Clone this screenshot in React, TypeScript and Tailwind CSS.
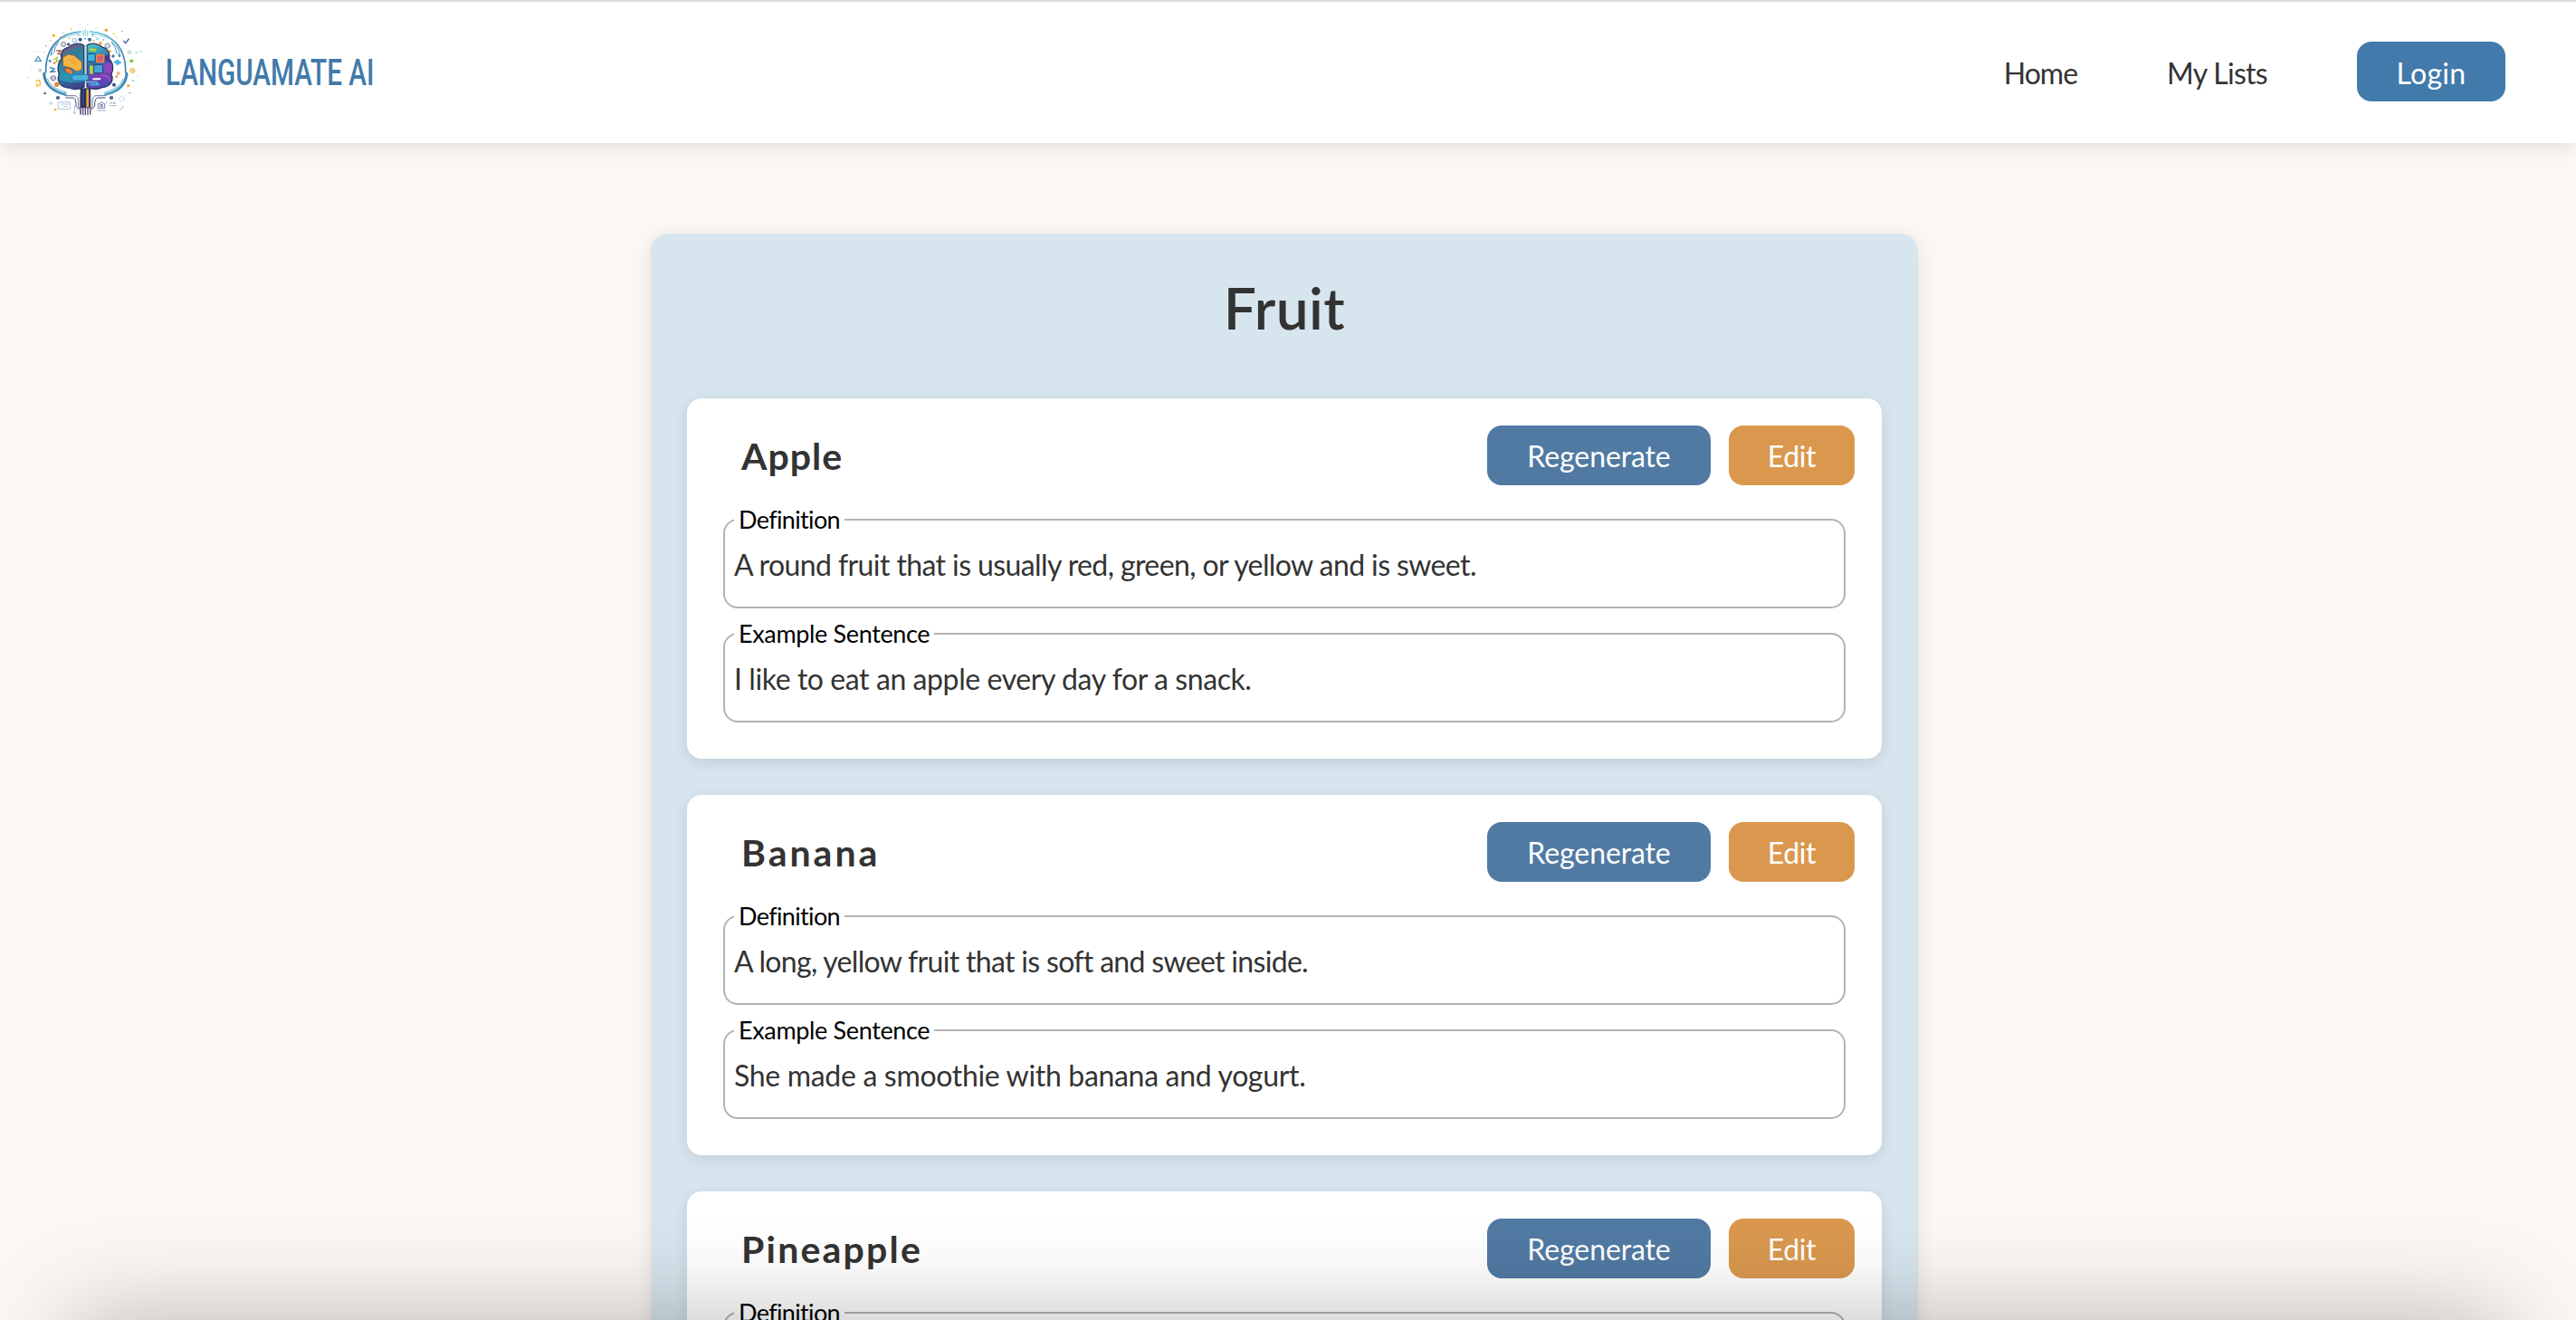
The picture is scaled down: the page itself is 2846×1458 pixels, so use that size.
type Entry = {
  word: string;
  wordClass: string;
  definition: string;
  definitionClass: string;
  sentence: string;
  sentenceClass: string;
};

const entries: Entry[] = [
  {
    word: "Apple",
    wordClass: "tracking-[1px]",
    definition: "A round fruit that is usually red, green, or yellow and is sweet.",
    definitionClass: "tracking-[-0.6px]",
    sentence: "I like to eat an apple every day for a snack.",
    sentenceClass: "tracking-[-0.42px]",
  },
  {
    word: "Banana",
    wordClass: "tracking-[3px]",
    definition: "A long, yellow fruit that is soft and sweet inside.",
    definitionClass: "tracking-[-0.68px]",
    sentence: "She made a smoothie with banana and yogurt.",
    sentenceClass: "tracking-[-0.32px]",
  },
  {
    word: "Pineapple",
    wordClass: "tracking-[2.2px]",
    definition: "A tropical fruit with spiky skin and sweet, juicy flesh.",
    definitionClass: "tracking-[-0.5px]",
    sentence: "We put pineapple on our pizza.",
    sentenceClass: "tracking-[-0.3px]",
  },
];

const confetti: [number, number, number, string][] = [
  [178, 118, 5, "#f2b630"], [200, 124, 3, "#f2b630"], [236, 96, 3, "#f5c860"], [168, 134, 2, "#e9a23a"],
  [152, 152, 3, "#8bbcd8"], [208, 110, 2, "#63a7cc"], [352, 101, 5, "#e0a030"], [377, 113, 3, "#f2c04b"],
  [405, 104, 2, "#5b92bb"], [386, 124, 2, "#f5c860"], [146, 174, 2, "#9fc5dc"], [436, 203, 6, "#8abf4e"],
  [452, 174, 2, "#6aaed1"], [467, 170, 2, "#9db7cb"], [103, 220, 2, "#c9d6e0"], [92, 257, 2, "#b0bccb"],
  [121, 279, 3, "#f2b630"], [149, 310, 4, "#50669b"], [192, 325, 6, "#4b6394"], [369, 325, 6, "#4b6394"],
  [183, 364, 4, "#f2b630"], [425, 285, 5, "#f2b04a"], [441, 268, 3, "#9ac7de"], [430, 308, 3, "#75aaca"],
  [456, 253, 2, "#8fc0d9"], [290, 82, 2, "#9fcfe2"], [318, 92, 2, "#e9b65b"], [265, 82, 2, "#d6e2ea"],
];

const ringGlyphs: [number, number, number, string][] = [
  [227, 147, 5, "#4a5c8c"], [266, 131, 6, "#384f84"], [297, 131, 6, "#3c6b9f"], [310, 135, 3, "#f0a63c"],
  [333, 143, 6, "#f2b24b"], [343, 132, 3, "#63c0dd"], [166, 202, 5, "#5aa5cb"], [180, 209, 4, "#ef8f3d"],
  [375, 186, 5, "#3678a8"], [386, 254, 4, "#f08b48"], [378, 281, 6, "#3b4b82"], [188, 280, 8, "#f0813b"],
  [392, 243, 6, "#f3b08a"], [168, 258, 3, "#b9a2c9"], [230, 127, 3, "#f2b630"], [282, 128, 3, "#42b7d9"],
  [364, 170, 5, "#f2ae45"], [396, 185, 4, "#3c8cc0"],
];

function Logo() {
  return (
    <svg viewBox="90 66 408 330" className="mb-[4px] h-[110px] w-[136px] shrink-0" fill="none" strokeLinecap="round">
      <defs>
        <linearGradient id="left" x1="200" y1="150" x2="260" y2="290" gradientUnits="userSpaceOnUse">
          <stop offset="0" stopColor="#8a4b7d" />
          <stop offset="0.35" stopColor="#2f7f9c" />
          <stop offset="0.7" stopColor="#2f8fb8" />
          <stop offset="1" stopColor="#4a3f8f" />
        </linearGradient>
        <linearGradient id="right" x1="300" y1="150" x2="355" y2="290" gradientUnits="userSpaceOnUse">
          <stop offset="0" stopColor="#45c3c4" />
          <stop offset="0.4" stopColor="#3b6ba8" />
          <stop offset="0.7" stopColor="#7a3fb0" />
          <stop offset="1" stopColor="#4b4bb5" />
        </linearGradient>
        <linearGradient id="ring" x1="150" y1="0" x2="420" y2="0" gradientUnits="userSpaceOnUse">
          <stop offset="0" stopColor="#3c7fae" />
          <stop offset="0.6" stopColor="#5fc4de" />
          <stop offset="1" stopColor="#3d86b3" />
        </linearGradient>
      </defs>

      <g>
        {confetti.map(([x, y, r, c]) => (
          <rect key={`${x}-${y}`} x={x - r} y={y - r} width={r * 2} height={r * 1.7} rx={r / 2} fill={c} />
        ))}
        {ringGlyphs.map(([x, y, r, c]) => (
          <circle key={`${x}-${y}`} cx={x} cy={y} r={r} fill={c} />
        ))}
      </g>

      <g stroke="url(#ring)">
        <path d="M268 105 C205 108 150 150 152 240" strokeWidth="5" />
        <path d="M298 105 C362 108 418 150 416 240" strokeWidth="5" />
        <path d="M262 112 C240 114 222 120 208 128M304 112C326 114 344 120 358 128" strokeWidth="2" />
        <path d="M146 244 C148 282 178 304 216 313M420 244 C417 282 388 304 350 313" strokeWidth="9" />
        <path d="M158 262 C164 284 188 298 220 306M408 262 C402 284 378 298 346 306" strokeWidth="2.5" />
        <path d="M194 138 C177 152 170 166 168 184 L180 172 L184 156ZM370 140 C388 152 396 166 398 186 L386 174 L382 158Z" strokeWidth="3" />
        <path d="M283 98V116M276 103V118M290 103V118" strokeWidth="4" stroke="#8fd6e6" />
      </g>

      <g stroke="#566c9a" strokeWidth="2.5">
        <circle cx="210" cy="147" r="8" fill="#d9d6da" stroke="#8d8589" />
        <circle cx="356" cy="152" r="8" fill="#e8e4dc" />
        <circle cx="177" cy="259" r="8" fill="#cfcbd8" />
        <circle cx="247" cy="134" r="7" stroke="#46b4d3" />
        <circle cx="439" cy="234" r="8" stroke="#f2bb58" fill="#f7d48f" />
        <circle cx="404" cy="327" r="8" stroke="#a5d4e3" strokeWidth="2" />
        <circle cx="429" cy="173" r="5" stroke="#8cc79a" />
        <circle cx="132" cy="233" r="4" stroke="#8bb5ce" />
        <circle cx="168" cy="342" r="4" stroke="#a0c6dc" />
        <path d="M117 202 L126 188 L136 202Z" stroke="#4b9bc6" strokeWidth="4" />
        <path d="M410 136 L416 143 L427 129" stroke="#456b9c" strokeWidth="4" />
        <path d="M120 268 L131 266 L134 280 L122 286" stroke="#f2b630" strokeWidth="4" />
        <path d="M166 224 L180 228 L168 238 L183 237" stroke="#3b7ba3" strokeWidth="4" />
        <path d="M178 198 L190 190 L186 205 L196 200" stroke="#a3c441" strokeWidth="4" />
        <path d="M188 168 L202 168 L192 178 L204 180" stroke="#b5613b" strokeWidth="4" />
        <path d="M378 205 L390 198 L402 207 L390 215Z" fill="#4db7dc" stroke="#4db7dc" />
        <path d="M317 122 L327 129 L318 131" stroke="#67c4df" />
        <path d="M303 114H311M307 114V120M256 117H266" stroke="#7aa3c2" />
        <path d="M106 170L112 171H144M488 211H502M442 176L452 172H474" stroke="#d3dde2" strokeWidth="1.5" />
      </g>

      <g stroke="#283564" strokeWidth="4">
        <path
          d="M278 150 C262 140 238 145 227 157 C207 160 199 179 204 194 C190 211 190 232 196 246 C186 270 202 290 228 291 C246 298 265 296 279 288Z"
          fill="url(#left)"
        />
        <path
          d="M288 150 C304 140 328 145 340 157 C358 160 366 180 362 196 C377 210 376 232 369 246 C379 268 364 288 338 290 C320 298 302 296 288 288Z"
          fill="url(#right)"
        />
      </g>
      <path d="M214 176 L262 156 L275 174 L250 180Z" fill="#2c8292" />
      <path d="M208 190 L226 180 L246 184 L272 206 L271 231 L254 237 L237 226 L210 219Z" fill="#f4b544" stroke="#7b4a3a" strokeWidth="2" />
      <path d="M229 196 L250 214M238 194L256 209" stroke="#dd8f2d" strokeWidth="2" />
      <path d="M214 226 L230 226 L243 240 L238 249 L219 239Z" fill="#ef7d2f" stroke="#7b3f3a" strokeWidth="2" />
      <path d="M204 244 C228 236 240 252 280 244 L280 268 C250 276 218 272 204 262Z" fill="#2b93b0" />
      <path d="M200 268 C230 284 262 280 280 278M206 278 C236 292 262 288 280 286" stroke="#28457f" strokeWidth="3" />
      <rect x="238" y="247" width="56" height="20" rx="9" fill="#49b3df" stroke="#255a8b" strokeWidth="2" />
      <rect x="282" y="152" width="5" height="94" fill="#9fd7e4" />
      <path d="M296 160 L320 162 L317 171 L297 169Z" fill="#b9cf3c" />
      <rect x="290" y="178" width="26" height="26" rx="4" fill="#3fb4dd" stroke="#1f4679" strokeWidth="3" />
      <rect x="320" y="182" width="24" height="24" rx="3" fill="#d9596f" stroke="#e8913f" strokeWidth="4" />
      <path d="M348 186 L362 180 L364 205 L348 204Z" fill="#573089" />
      <rect x="297" y="217" width="12" height="28" rx="3" fill="#a9cf45" />
      <rect x="311" y="214" width="30" height="28" rx="4" fill="#4b9fdc" stroke="#1f4679" strokeWidth="3" />
      <rect x="345" y="210" width="26" height="30" rx="5" fill="#8d45bd" />
      <path d="M308 259 H335 L332 265 H306Z" fill="#f4f4ff" />
      <path d="M284 272 H320 L326 280 H300" stroke="#42bde0" strokeWidth="5" />
      <path d="M336 250 C356 250 362 258 364 266" stroke="#a14fc9" strokeWidth="5" />

      <rect x="266" y="292" width="34" height="66" fill="#26315c" />
      <rect x="286" y="296" width="8" height="60" fill="#f0a53b" />
      <path d="M276 296V350" stroke="#5a7db0" strokeWidth="2" />
      <g stroke="#6a7599" strokeWidth="3">
        <path d="M216 317 H248 Q258 318 260 334 V354 L267 362V378" />
        <path d="M218 324 H244 Q251 326 252 342 V352 L262 362" stroke="#454d7a" />
        <path d="M350 317 H318 Q308 318 306 334 V354 L299 362V378" />
        <path d="M348 324 H322 Q315 326 314 342 V352 L304 362" stroke="#454d7a" />
        <path d="M267 312V378M275 356V380M283 360V380M291 356V380M299 312V378" stroke="#5d4577" strokeWidth="4" />
      </g>

      <g stroke="#9bbdd0" strokeWidth="2.5">
        <path d="M194 338 H232 V361 H194Z" />
        <path d="M202 345 H226M212 353H226" stroke="#9daec4" strokeDasharray="4 3" />
        <path d="M247 349V372" />
        <circle cx="247" cy="374" r="3" />
        <path d="M326 344 H331 L334 339 H340 L343 344 H347 V358 H326Z" stroke="#526a9b" />
        <circle cx="336" cy="350" r="4" stroke="#3c5489" />
        <path d="M323 366H350" stroke="#8794b8" />
        <path d="M353 337V342M364 344L368 338L371 344M376 344V338L381 344V338M363 350H386" stroke="#93a9c3" />
        <path d="M408 350 L405 360 L397 362" />
        <path d="M224 385H318" stroke="#e7edf1" strokeWidth="1.5" />
      </g>
    </svg>
  );
}

function Field({ label, labelClass, text, textClass }: { label: string; labelClass: string; text: string; textClass: string }) {
  return (
    <fieldset className="mx-[40px] h-[115px] min-w-0 rounded-[16px] border-2 border-[#b3b3b3] pl-[10px]">
      <legend className={`pt-px pr-[5px] pb-px pl-[5px] text-[27px] leading-[32px] text-black ${labelClass}`}>{label}</legend>
      <p className={`pt-[13px] text-[32px] leading-[40px] whitespace-nowrap ${textClass}`}>{text}</p>
    </fieldset>
  );
}

function WordCard({ entry }: { entry: Entry }) {
  return (
    <article className="flex h-[398px] shrink-0 flex-col gap-[11px] rounded-[16px] bg-white pt-[30px] shadow-[0_4px_16px_rgba(0,0,0,0.1)]">
      <div className="mb-[10px] flex items-center gap-[20px] pr-[30px] pl-[60px]">
        <h2 className={`flex-1 pt-px text-[41px] font-bold leading-[50px] ${entry.wordClass}`}>{entry.word}</h2>
        <button className="h-[66px] w-[247px] rounded-[16px] bg-[#517aa3] pt-[2px] text-[32px] tracking-[-0.1px] text-white">
          Regenerate
        </button>
        <button className="h-[66px] w-[139px] rounded-[16px] bg-[#da984f] pt-[2px] text-[32px] tracking-[-0.4px] text-white">Edit</button>
      </div>
      <Field label="Definition" labelClass="tracking-[-0.65px]" text={entry.definition} textClass={entry.definitionClass} />
      <Field label="Example Sentence" labelClass="tracking-[-0.35px]" text={entry.sentence} textClass={entry.sentenceClass} />
    </article>
  );
}

export default function App() {
  return (
    <div className="relative flex h-[1458px] w-full flex-col overflow-hidden bg-[#fbf7f4] font-[Lato,sans-serif] text-[#333333]">
      <header className="flex h-[158px] shrink-0 items-center justify-between border-t-2 border-[#dadada] bg-white pr-[78px] pb-[2px] pl-[30px] shadow-[0_4px_20px_rgba(0,0,0,0.1)]">
        <div className="flex items-center gap-[17px]">
          <Logo />
          <span className="origin-left scale-x-[0.742] pt-[3px] font-[Roboto,sans-serif] text-[40px] font-medium whitespace-nowrap text-[#417aab]">
            LANGUAMATE AI
          </span>
        </div>
        <nav className="flex items-center gap-[99px] text-[32px]">
          <a className="pt-[4px] tracking-[-1px]">Home</a>
          <a className="pt-[4px] tracking-[-0.7px]">My Lists</a>
          <button className="h-[66px] w-[164px] rounded-[16px] bg-[#417aab] pt-[3px] tracking-[0.3px] text-white">Login</button>
        </nav>
      </header>

      <main className="mt-[100px] ml-[719px] flex w-[1400px] shrink-0 flex-col gap-[40px] rounded-[20px] bg-[#d7e5ee] px-[40px] pt-[43px] pb-[40px] shadow-[0_4px_20px_rgba(0,0,0,0.1)]">
        <h1 className="mb-[22px] text-center text-[64px] font-semibold leading-[77px] tracking-[0.4px]">Fruit</h1>
        {entries.map((entry) => (
          <WordCard key={entry.word} entry={entry} />
        ))}
      </main>

      <div className="pointer-events-none absolute top-[1458px] right-[80px] left-[80px] h-[300px] shadow-[0_0_110px_rgba(0,0,0,0.28)]" />
    </div>
  );
}
